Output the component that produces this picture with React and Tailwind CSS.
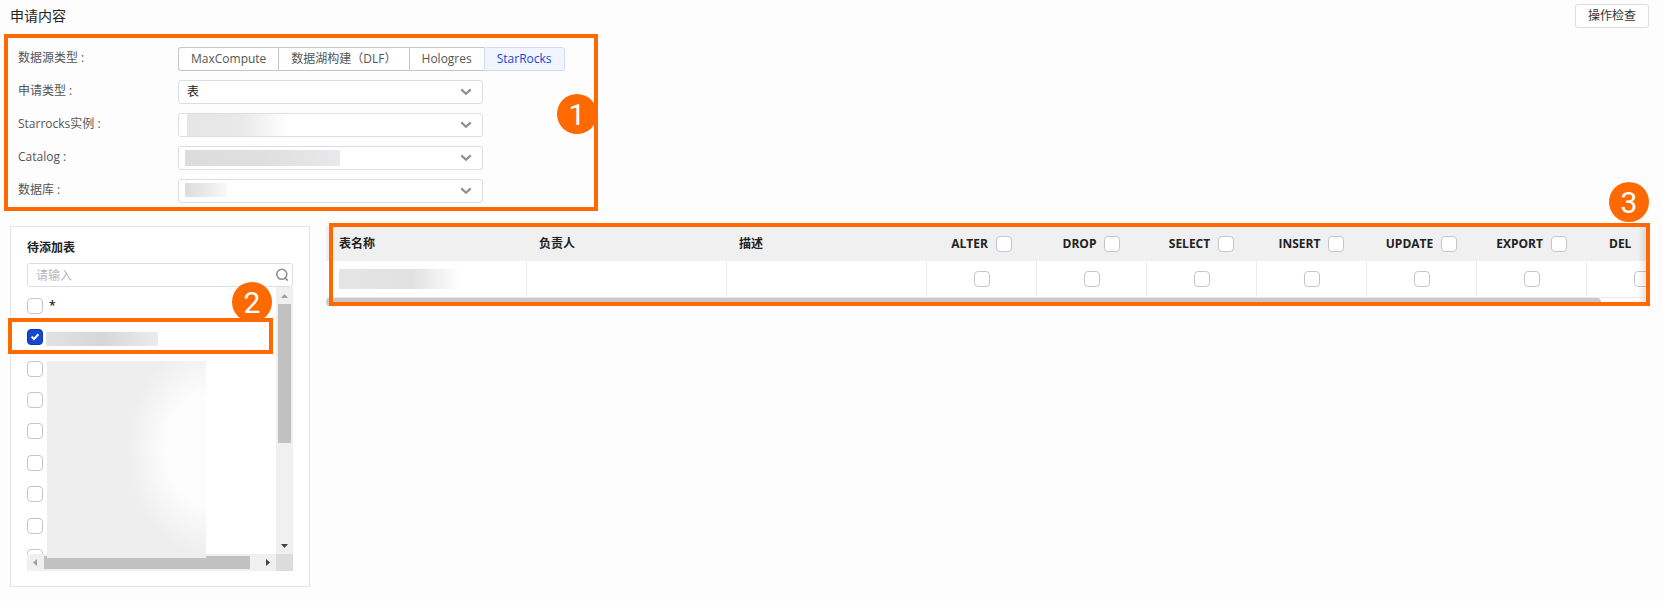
import { useState } from "react";
import clsx from "clsx";

const sources = ["MaxCompute", "数据湖构建（DLF）", "Hologres", "StarRocks"];

const fields = [
  { id: "type", label: "申请类型 :", value: "表" },
  {
    id: "instance",
    label: "Starrocks实例 :",
    mask: "left-[9px] top-px w-[102px] h-[22px] bg-linear-to-r from-[#e6e6e6] via-[#e8e8e8] to-transparent",
  },
  {
    id: "catalog",
    label: "Catalog :",
    mask: "left-[7px] top-1 w-[155px] h-4 bg-linear-to-r from-[#dcdcdc] via-[#dfdfdf] to-[#e8e9ea]",
  },
  {
    id: "database",
    label: "数据库 :",
    mask: "left-[7px] top-1 w-[42px] h-[14px] bg-linear-to-r from-[#dcdcdc] to-[#f8f8f8]",
  },
];

const permissions = ["ALTER", "DROP", "SELECT", "INSERT", "UPDATE", "EXPORT"];

const Checkbox = ({ label, defaultChecked = false }) => {
  const [checked, setChecked] = useState(defaultChecked);

  return (
    <span className="relative block w-4 h-4 shrink-0">
      <input
        type="checkbox"
        aria-label={label}
        checked={checked}
        onChange={() => setChecked(!checked)}
        className="block appearance-none w-4 h-4 rounded-[4px] border border-[#c4c6cf] bg-white checked:bg-[#1746d1] checked:border-[#0f35b3]"
      />
      {checked && (
        <svg
          viewBox="0 0 16 16"
          className="absolute inset-0 w-4 h-4 pointer-events-none"
          fill="none"
          stroke="#fff"
          strokeWidth="2"
        >
          <path d="M4.5 7.6 7 10 11.4 5.2" />
        </svg>
      )}
    </span>
  );
};

const Badge = ({ children, className }) => (
  <span
    className={clsx(
      "absolute w-10 h-10 rounded-full bg-[#ff6a00] text-white text-center text-[30px] leading-[42px] font-['Roboto',sans-serif]",
      className
    )}
  >
    {children}
  </span>
);

const SelectField = ({ field }) => (
  <div className="flex items-start">
    <label htmlFor={field.id} className="w-40 shrink-0 leading-[22px]">
      {field.label}
    </label>
    <div className="relative w-[305px] h-6">
      <select
        id={field.id}
        className="appearance-none block w-full h-6 px-2 rounded-[3px] border border-[#dcdee3] bg-white text-[#222]"
      >
        <option>{field.value}</option>
      </select>
      {field.mask && <span className={clsx("absolute", field.mask)} />}
      <svg
        viewBox="0 0 12 12"
        className="absolute right-[11px] top-[6px] w-3 h-3 pointer-events-none"
        fill="none"
        stroke="#8c8f96"
        strokeWidth="2.2"
      >
        <path d="M1.3 3.4 6 7.8 10.7 3.4" />
      </svg>
    </div>
  </div>
);

const RequestForm = () => {
  const [source, setSource] = useState("StarRocks");

  return (
    <section className="relative mt-[6px] mx-1 w-[594px] max-w-full border-4 border-[#ff6a00] pt-[9px] pb-1 pl-[10px] flex flex-col gap-[9px] text-[#555]">
      <div className="flex items-start">
        <span className="w-40 shrink-0 leading-[22px]">数据源类型 :</span>
        <div className="flex">
          {sources.map((item) => (
            <button
              key={item}
              type="button"
              onClick={() => setSource(item)}
              className={clsx(
                "h-6 px-3 border-y border-l leading-[22px] whitespace-nowrap first:rounded-l-[3px] last:rounded-r-[3px] last:border-r",
                item === source
                  ? "bg-[#f2f5ff] border-[#d0dafc] text-[#1746d1]"
                  : "bg-white border-[#c4c6cf]"
              )}
            >
              {item}
            </button>
          ))}
        </div>
      </div>
      {fields.map((field) => (
        <SelectField key={field.id} field={field} />
      ))}
      <Badge className="right-[-3px] top-14">1</Badge>
    </section>
  );
};

const Arrow = ({ d, fill }) => (
  <svg viewBox="0 0 17 17" className="w-[17px] h-[17px] shrink-0" fill={fill}>
    <path d={d} />
  </svg>
);

const TableList = () => (
  <section className="relative w-[300px] shrink-0 border border-[#e3e3f1] bg-white px-4 pt-[11px] pb-[15px]">
    <h2 className="font-bold leading-5 text-[#222]">待添加表</h2>
    <div className="relative mt-[5px]">
      <input
        type="text"
        aria-label="待添加表"
        placeholder="请输入"
        className="block w-full h-6 px-2 rounded-[3px] border border-[#dcdee3] bg-white placeholder:text-[#b4b6bd]"
      />
      <svg
        viewBox="0 0 14 14"
        className="absolute right-1 top-[5px] w-[14px] h-[14px]"
        fill="none"
        stroke="#8c8f96"
        strokeWidth="1.6"
      >
        <circle cx="6.8" cy="6.3" r="5" />
        <path d="M10 9.8 12.800 12.600" />
      </svg>
    </div>

    <div className="flex h-[267px]">
      <div className="flex-1 overflow-hidden pt-[3px]">
        <ul className="grid auto-rows-fr h-[283px]">
          {Array.from({ length: 9 }, (_, i) => (
            <li key={i} className="flex items-center">
              <Checkbox
                label={i === 0 ? "*" : `表 ${i}`}
                defaultChecked={i === 1}
              />
              {i === 0 && (
                <span className="ml-[6px] leading-5 font-semibold text-[#222]">
                  *
                </span>
              )}
              {i === 1 && (
                <span className="ml-[3px] mt-1 w-28 h-[14px] bg-linear-to-r from-[#e2e2e2] via-[#d6d6d6] to-[#ececee]" />
              )}
            </li>
          ))}
        </ul>
      </div>
      {/* vertical scrollbar */}
      <div className="w-[17px] bg-[#f0f0f0] flex flex-col items-center">
        <Arrow d="M5 11 8.5 7 12 11z" fill="#a0a0a0" />
        <div className="w-[13px] h-[139px] bg-[#c1c1c1]" />
        <div className="mt-auto h-[17px]">
          <Arrow d="M5 7h7L8.500 11z" fill="#444" />
        </div>
      </div>
    </div>
    {/* horizontal scrollbar */}
    <div className="flex h-[17px]">
      <div className="flex-1 bg-[#f0f0f0] flex items-center">
        <Arrow d="M10 5v7L6 8.500z" fill="#a0a0a0" />
        <div className="w-[206px] h-[13px] bg-[#c1c1c1]" />
        <div className="ml-auto h-[17px]">
          <Arrow d="M7 5v7l4-3.500z" fill="#444" />
        </div>
      </div>
      <div className="w-[17px] bg-[#dcdcdc]" />
    </div>

    {/* masked names */}
    <div className="absolute left-9 top-[134px] w-[159px] h-[197px] bg-[#eeeeee] bg-[radial-gradient(ellipse_80px_105px_at_100%_45%,#fdfdfd_50%,transparent_100%)]" />
    <div className="absolute -left-[3px] top-[91px] w-[265px] h-9 border-4 border-[#ff6a00] pointer-events-none" />
    <Badge className="left-[221px] top-[55px]">2</Badge>
  </section>
);

const PermissionTable = () => (
  <section className="relative flex-1 min-w-0 h-[80px]">
    <div className="overflow-hidden h-full">
      <table className="table-fixed border-collapse w-[1370px]">
        <colgroup>
          <col className="w-[200px]" />
          <col className="w-[200px]" />
          <col className="w-[200px]" />
          {permissions.map((name) => (
            <col key={name} className="w-[110px]" />
          ))}
          <col className="w-[110px]" />
        </colgroup>
        <thead className="bg-[#f0f0f0] text-[#222]">
          <tr className="h-[35px]">
            <th className="pl-[13px] text-left">表名称</th>
            <th className="pl-[13px] text-left">负责人</th>
            <th className="pl-[13px] text-left">描述</th>
            {permissions.map((name) => (
              <th key={name} className="pl-px">
                <div className="flex items-center justify-center gap-2">
                  {name}
                  <Checkbox label={name} />
                </div>
              </th>
            ))}
            <th className="pl-[23px] text-left">DEL</th>
          </tr>
        </thead>
        <tbody>
          <tr className="h-[36px] border-b border-[#ebebeb] bg-white">
            <td className="pl-[13px] border-r border-[#ebebeb]">
              <div className="w-[123px] h-5 bg-linear-to-r from-[#e4e4e4] from-0% via-[#e2e2e3] via-60% to-transparent" />
            </td>
            <td className="border-r border-[#ebebeb]" />
            <td className="border-r border-[#ebebeb]" />
            {[...permissions, "DEL"].map((name) => (
              <td key={name} className="pl-[2px] border-r border-[#ebebeb]">
                <div className="flex justify-center">
                  <Checkbox label={`${name} 1`} />
                </div>
              </td>
            ))}
          </tr>
        </tbody>
      </table>
      <div className="mr-[49px] h-2 rounded-full bg-[#c9c9c9]" />
    </div>
    <div className="absolute right-1 top-0 bottom-1 w-2 bg-linear-to-r from-transparent to-black/10" />
    <div className="absolute left-[3px] right-0 -top-[3px] bottom-0 border-4 border-[#ff6a00] pointer-events-none" />
    <Badge className="right-px -top-11">3</Badge>
  </section>
);

const App = () => (
  <main className="min-h-screen bg-[#fdfdfd] text-xs text-[#333] font-['Open_Sans','Noto_Sans_CJK_SC',sans-serif]">
    <header className="flex items-center justify-between pt-1 pl-[10px] pr-[14px]">
      <h1 className="text-sm leading-6 text-[#222]">申请内容</h1>
      <button
        type="button"
        className="h-6 px-3 rounded-[3px] border border-[#dcdee3] bg-white leading-[22px]"
      >
        操作检查
      </button>
    </header>
    <RequestForm />
    <div className="mt-[15px] flex items-start gap-4 pl-[10px] pr-[13px]">
      <TableList />
      <PermissionTable />
    </div>
  </main>
);

export default App;
